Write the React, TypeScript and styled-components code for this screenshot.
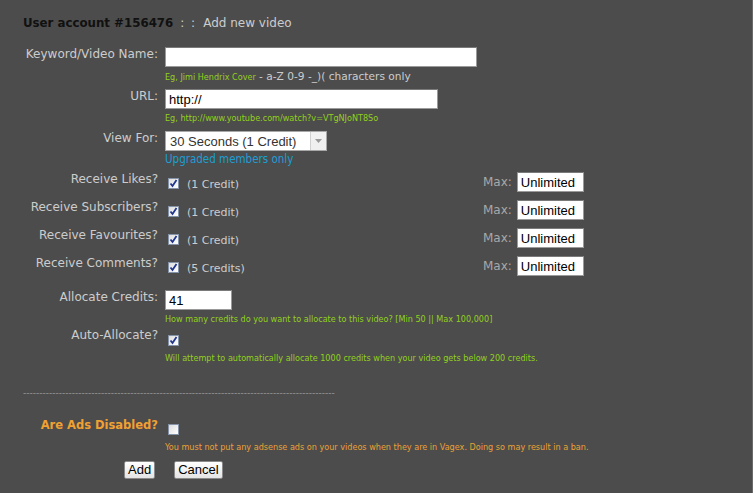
import styled, { createGlobalStyle } from 'styled-components'

const GlobalStyle = createGlobalStyle`
  html, body {
    margin: 0;
    padding: 0;
    background: #4c4c4c;
  }
  body {
    font-family: "DejaVu Sans", Verdana, sans-serif;
    color: #cccccc;
  }
`

type Receive = { label: string; credit: string }

const receives: Receive[] = [
  { label: 'Receive Likes?', credit: '(1 Credit)' },
  { label: 'Receive Subscribers?', credit: '(1 Credit)' },
  { label: 'Receive Favourites?', credit: '(1 Credit)' },
  { label: 'Receive Comments?', credit: '(5 Credits)' },
]

function Check({ checked }: { checked?: boolean }) {
  return (
    <CheckBox>
      {checked && (
        <svg width="9" height="9" viewBox="0 0 9 9">
          <path d="M1.5 4.5 L3.5 7 L7.5 1" fill="none" stroke="#21368f" strokeWidth="1.8" />
        </svg>
      )}
    </CheckBox>
  )
}

function App() {
  return (
    <Page>
      <GlobalStyle />
      <Title>
        <b>User account #156476</b>
        <Sep>: :</Sep>
        Add new video
      </Title>

      <Row $mb={6}>
        <Label>Keyword/Video Name:</Label>
        <Field>
          <TextInput $w={312} />
          <Hint>
            <Green>Eg, Jimi Hendrix Cover</Green>
            <Rule> - a-Z 0-9 -_)( characters only</Rule>
          </Hint>
        </Field>
      </Row>

      <Row $mb={7}>
        <Label>URL:</Label>
        <Field>
          <TextInput $w={273} defaultValue="http://" />
          <Hint>
            <Green>Eg, http://www.youtube.com/watch?v=VTgNJoNT8So</Green>
          </Hint>
        </Field>
      </Row>

      <Row $mb={5}>
        <Label>View For:</Label>
        <Field>
          <Select>
            <span>30 Seconds (1 Credit)</span>
            <SelectArrow>
              <svg width="7" height="4" viewBox="0 0 7 4">
                <path d="M0 0 H7 L3.5 4 Z" fill="#9a9a9a" />
              </svg>
            </SelectArrow>
          </Select>
          <Upgrade>Upgraded members only</Upgrade>
        </Field>
      </Row>

      {receives.map((r) => (
        <Row key={r.label} $mb={8}>
          <Label>{r.label}</Label>
          <ReceiveField>
            <CheckLine>
              <Check checked />
              <Credit>{r.credit}</Credit>
            </CheckLine>
            <MaxBox>
              <MaxLabel>Max:</MaxLabel>
              <TextInput $w={67} defaultValue="Unlimited" />
            </MaxBox>
          </ReceiveField>
        </Row>
      ))}

      <Row $mb={4} $mt={14}>
        <Label>Allocate Credits:</Label>
        <Field>
          <TextInput $w={67} defaultValue="41" />
          <Hint>
            <Green>How many credits do you want to allocate to this video? [Min 50 || Max 100,000]</Green>
          </Hint>
        </Field>
      </Row>

      <Row $mb={0}>
        <Label $pt={-1}>Auto-Allocate?</Label>
        <Field>
          <CheckLine>
            <Check checked />
          </CheckLine>
          <Hint>
            <Green>Will attempt to automatically allocate 1000 credits when your video gets below 200 credits.</Green>
          </Hint>
        </Field>
      </Row>

      <Dashes>{'-'.repeat(96)}</Dashes>

      <Row $mb={8}>
        <AdsLabel>Are Ads Disabled?</AdsLabel>
        <Field>
          <CheckLine>
            <Check />
          </CheckLine>
          <Hint>
            <Orange>You must not put any adsense ads on your videos when they are in Vagex. Doing so may result in a ban.</Orange>
          </Hint>
        </Field>
      </Row>

      <Buttons>
        <Button>Add</Button>
        <Button>Cancel</Button>
      </Buttons>
    </Page>
  )
}

const Page = styled.div`
  width: 753px;
  height: 493px;
  box-sizing: border-box;
  padding: 15px 0 0 0;
  overflow: hidden;
  border-right: 1px solid #6a6a6a;
`

const Title = styled.div`
  margin-left: 23px;
  font-size: 12px;
  color: #cccccc;
  line-height: 16px;
  margin-bottom: 16px;
  white-space: nowrap;

  b {
    color: #111111;
    font-size: 11.8px;
  }
`

const Sep = styled.span`
  display: inline-block;
  margin: 0 8px 0 7px;
  word-spacing: 3px;
`

const Row = styled.div<{ $mb: number; $mt?: number }>`
  display: grid;
  grid-template-columns: 158px 1fr;
  column-gap: 7px;
  align-items: start;
  margin-bottom: ${(p) => p.$mb}px;
  margin-top: ${(p) => p.$mt ?? 0}px;
`

const Label = styled.div<{ $pt?: number }>`
  text-align: right;
  font-size: 12px;
  line-height: 14px;
  color: #cccccc;
  white-space: nowrap;
  position: relative;
  top: ${(p) => p.$pt ?? 0}px;
`

const AdsLabel = styled(Label)`
  color: #f0a132;
  font-weight: bold;
  font-size: 11.5px;
`

const Field = styled.div`
  display: flex;
  flex-direction: column;
  align-items: flex-start;
`

const ReceiveField = styled.div`
  display: grid;
  grid-template-columns: 318px auto;
  align-items: center;
`

const TextInput = styled.input<{ $w: number }>`
  width: ${(p) => p.$w}px;
  height: 20px;
  box-sizing: border-box;
  border: 1px solid #9a9a9a;
  border-top-color: #7a7a7a;
  background: #ffffff;
  padding: 0 3px;
  margin: 0;
  font-family: "Liberation Sans", Arial, sans-serif;
  font-size: 13px;
  color: #000000;
  outline: none;
`

const Hint = styled.div`
  margin-top: 3px;
  font-size: 9px;
  line-height: 12px;
  white-space: nowrap;
  font-family: "DejaVu Sans Condensed", "DejaVu Sans", sans-serif;
`

const Green = styled.span`
  color: #93d01c;
`

const Orange = styled.span`
  color: #eaa035;
`

const Rule = styled.span`
  color: #cccccc;
  font-family: "DejaVu Sans", sans-serif;
  font-size: 10.6px;
`

const Select = styled.div`
  width: 162px;
  height: 20px;
  box-sizing: border-box;
  border: 1px solid #a8a8a8;
  background: #ffffff;
  display: flex;
  align-items: center;
  justify-content: space-between;
  padding-left: 4px;
  font-family: "Liberation Sans", Arial, sans-serif;
  font-size: 13px;
  color: #333333;
`

const SelectArrow = styled.div`
  width: 16px;
  height: 18px;
  box-sizing: border-box;
  border-left: 1px solid #d0d0d0;
  background: #f0f0f0;
  display: flex;
  align-items: center;
  justify-content: center;
`

const Upgrade = styled.div`
  margin-top: 1px;
  font-family: "DejaVu Sans Condensed", "DejaVu Sans", sans-serif;
  font-size: 11.5px;
  line-height: 15px;
  color: #1c9ed2;
`

const CheckLine = styled.div`
  display: flex;
  align-items: center;
  height: 20px;
  padding-left: 3px;
`

const CheckBox = styled.span`
  width: 11px;
  height: 11px;
  box-sizing: border-box;
  border: 1px solid #8593a8;
  background: linear-gradient(135deg, #dcdcdc, #ffffff);
  display: inline-flex;
  align-items: center;
  justify-content: center;
  margin-top: 2px;
`

const Credit = styled.span`
  margin-left: 8px;
  margin-top: 4px;
  font-size: 11px;
  color: #cccccc;
`

const MaxBox = styled.div`
  display: flex;
  align-items: center;
  gap: 5px;
`

const MaxLabel = styled.span`
  font-size: 12px;
  color: #a8a8a8;
`

const Dashes = styled.div`
  margin: 23px 0 19px 23px;
  color: #9a9a9a;
  font-size: 9px;
  line-height: 12px;
  white-space: nowrap;
`

const Buttons = styled.div`
  display: flex;
  gap: 19px;
  margin-left: 124px;
`

const Button = styled.button`
  height: 18px;
  box-sizing: border-box;
  padding: 0 3px;
  border: 1px solid #8a8a8a;
  border-radius: 2px;
  background: linear-gradient(#ffffff, #e4e4e4);
  font-family: "Liberation Sans", Arial, sans-serif;
  font-size: 13px;
  line-height: 14px;
  color: #000000;
`

export default App
